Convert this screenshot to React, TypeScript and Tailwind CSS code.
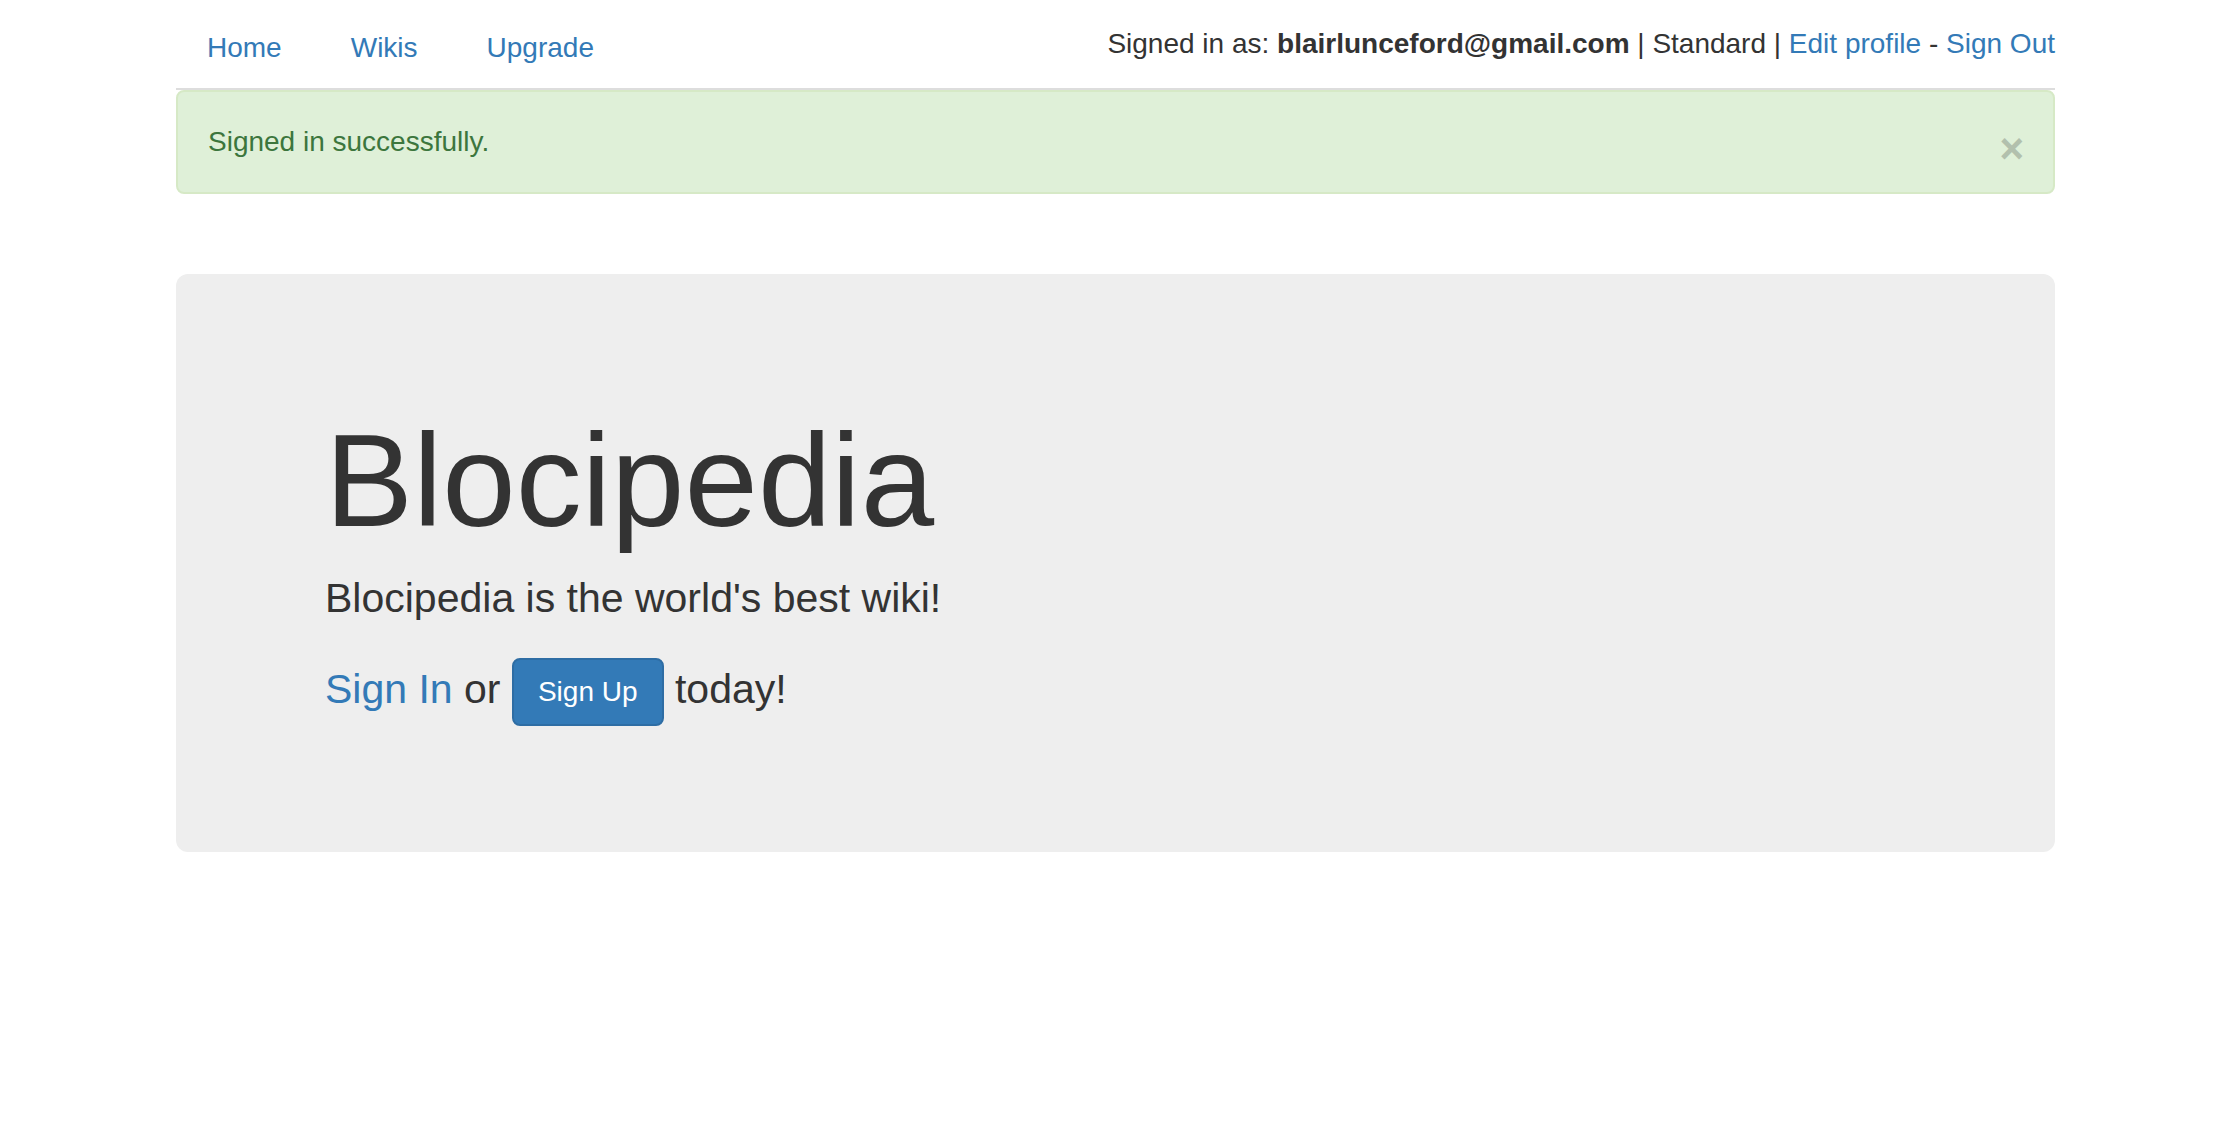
import React from 'react';

const navLinks = ['Home', 'Wikis', 'Upgrade'];

export default function App() {
  return (
    <div className="min-h-screen bg-white font-['Liberation_Sans',Arial,sans-serif] text-[28px] leading-[40px] text-[#333]">
      <div className="ml-[176px] w-[1879px]">
        {/* top nav */}
        <nav className="flex h-[90px] justify-between border-b-2 border-[#ddd]">
          <ul className="flex pt-[28px]">
            {navLinks.map((l) => (
              <li key={l} className="mr-[7px]">
                <a href="#" className="block px-[31px] text-[#337ab7]">
                  {l}
                </a>
              </li>
            ))}
          </ul>
          <p className="pt-[24px]">
            Signed in as: <strong className="font-bold">blairlunceford@gmail.com</strong> | Standard |{' '}
            <a href="#" className="text-[#337ab7]">Edit profile</a> -{' '}
            <a href="#" className="text-[#337ab7]">Sign Out</a>
          </p>
        </nav>

        {/* flash */}
        <div className="flex items-start justify-between rounded-[8px] border-2 border-[#d6e9c6] bg-[#dff0d8] py-[30px] pl-[30px] pr-[29px] text-[#3c763d]">
          <span>Signed in successfully.</span>
          <button className="relative top-[6px] h-[40px] text-[42px] font-bold leading-none text-[#b2c0ad]">×</button>
        </div>

        {/* jumbotron */}
        <div className="mt-[80px] rounded-[12px] bg-[#eee] pb-[96px] pl-[149px] pt-[96px]">
          <h1 className="mb-[18px] mt-[42px] text-[132px] leading-[138px] text-[#333]">Blocipedia</h1>
          <p className="text-[41px] font-light leading-[60px]">Blocipedia is the world's best wiki!</p>
          <p className="mt-[30px] text-[41px] font-light leading-[60px]">
            <a href="#" className="text-[#337ab7]">Sign In</a> or{' '}
            <a
              href="#"
              className="inline-block rounded-[8px] border-2 border-[#2e6da4] bg-[#337ab7] px-[24px] py-[12px] align-middle text-[28px] font-normal leading-[40px] text-white"
            >
              Sign Up
            </a>{' '}
            today!
          </p>
          <div className="h-[30px]" />
        </div>
      </div>
    </div>
  );
}
